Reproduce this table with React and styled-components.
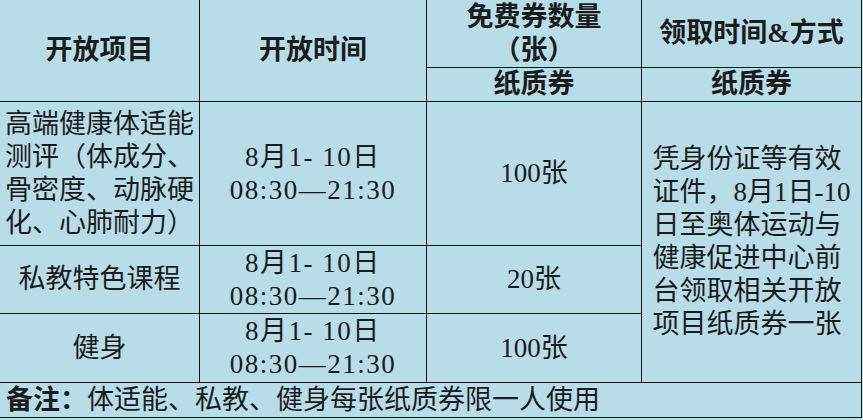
import React from "react";
import styled, { createGlobalStyle } from "styled-components";

const GlobalStyle = createGlobalStyle`
  html, body {
    margin: 0;
    padding: 0;
    background: #b8dde8;
  }
`;

const Table = styled.div`
  display: grid;
  grid-template-columns: 200px 227px 215px 220px;
  grid-template-rows: 68px 34px 144px 68px 69px 35px;
  width: 862px;
  background: #b8dde8;
  color: #1c1c1c;
  font-family: "Liberation Serif", "Noto Sans CJK SC", serif;
  font-size: 27px;
  line-height: 33px;
`;

const Cell = styled.div`
  box-sizing: border-box;
  display: flex;
  align-items: center;
  justify-content: ${(p) => (p.$left ? "flex-start" : "center")};
  text-align: ${(p) => (p.$left ? "left" : "center")};
  padding: ${(p) => (p.$left ? "0 0 0 5px" : "0")};
  font-weight: ${(p) => (p.$bold ? 700 : 400)};
  grid-column: ${(p) => p.$col || "auto"};
  grid-row: ${(p) => p.$row || "auto"};
  border-right: 1.5px solid #111;
  border-bottom: 1.5px solid #111;
`;

const Lines = styled.div`
  display: flex;
  flex-direction: column;
  align-items: ${(p) => (p.$left ? "flex-start" : "center")};
  letter-spacing: ${(p) => p.$spacing || "normal"};
`;

const Note = styled.div`
  box-sizing: border-box;
  grid-column: 1 / 5;
  display: flex;
  align-items: center;
  padding-left: 6px;
  border-right: 1.5px solid #111;
  border-bottom: 1.5px solid #111;
`;

const NoteLabel = styled.span`
  font-weight: 700;
`;

const dates = ["8月1- 10日", "08:30—21:30"];

const Block = ({ lines, left, spacing }) => (
  <Lines $left={left} $spacing={spacing}>
    {lines.map((l) => (
      <span key={l}>{l}</span>
    ))}
  </Lines>
);

export default function App() {
  return (
    <>
      <GlobalStyle />
      <Table>
        <Cell $bold $col="1" $row="1 / 3">开放项目</Cell>
        <Cell $bold $col="2" $row="1 / 3">开放时间</Cell>
        <Cell $bold $col="3" $row="1">
          <Block lines={["免费券数量", "（张）"]} />
        </Cell>
        <Cell $bold $col="4" $row="1">领取时间&amp;方式</Cell>
        <Cell $bold $col="3" $row="2">纸质券</Cell>
        <Cell $bold $col="4" $row="2">纸质券</Cell>

        <Cell $left $col="1" $row="3">
          <Block
            left
            lines={["高端健康体适能", "测评（体成分、", "骨密度、动脉硬", "化、心肺耐力）"]}
          />
        </Cell>
        <Cell $col="2" $row="3">
          <Block lines={dates} spacing="1.5px" />
        </Cell>
        <Cell $col="3" $row="3">100张</Cell>
        <Cell $col="4" $row="3 / 6">
          <Block
            left
            lines={[
              "凭身份证等有效",
              "证件，8月1日-10",
              "日至奥体运动与",
              "健康促进中心前",
              "台领取相关开放",
              "项目纸质券一张",
            ]}
          />
        </Cell>

        <Cell $col="1" $row="4">私教特色课程</Cell>
        <Cell $col="2" $row="4">
          <Block lines={dates} spacing="1.5px" />
        </Cell>
        <Cell $col="3" $row="4">20张</Cell>

        <Cell $col="1" $row="5">健身</Cell>
        <Cell $col="2" $row="5">
          <Block lines={dates} spacing="1.5px" />
        </Cell>
        <Cell $col="3" $row="5">100张</Cell>

        <Note>
          <NoteLabel>备注：</NoteLabel>体适能、私教、健身每张纸质券限一人使用
        </Note>
      </Table>
    </>
  );
}
